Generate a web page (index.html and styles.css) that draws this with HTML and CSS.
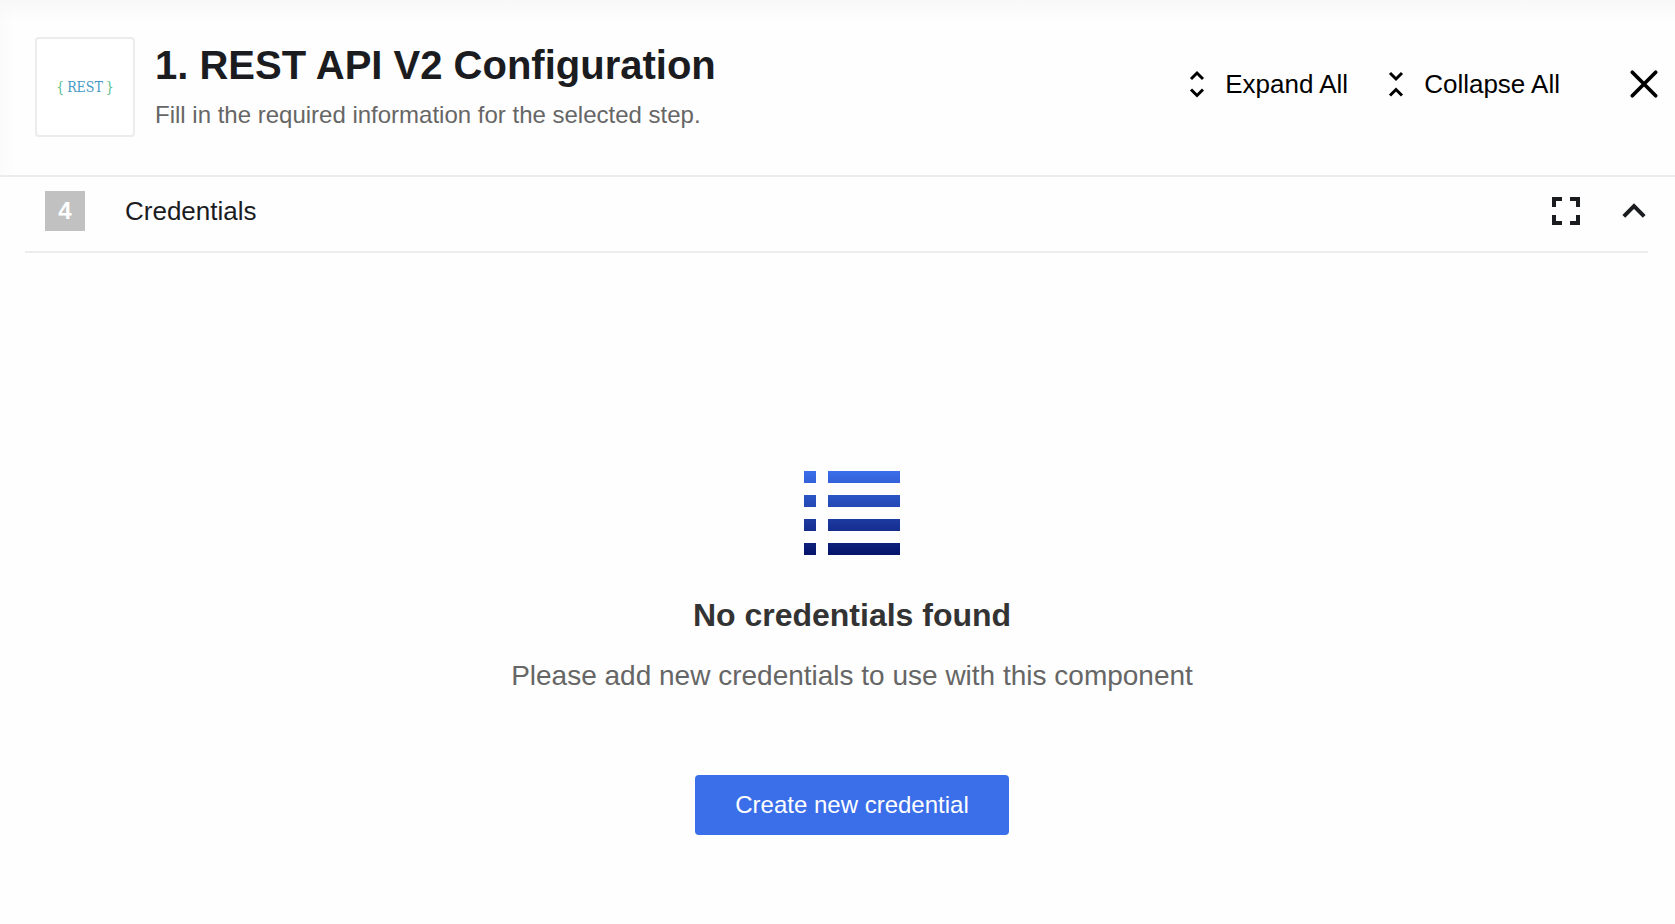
FILE: index.html
```html
<!DOCTYPE html>
<html lang="en">
<head>
<meta charset="utf-8">
<title>REST API V2 Configuration</title>
<link rel="stylesheet" href="styles.css">
</head>
<body>
<header class="header">
  <div class="logo"><span class="logo-brace">{</span><span class="logo-name">REST</span><span class="logo-brace">}</span></div>
  <div class="heading">
    <h1 class="title">1. REST API V2 Configuration</h1>
    <p class="subtitle">Fill in the required information for the selected step.</p>
  </div>
  <div class="actions">
    <button class="action" type="button">
      <svg width="32" height="32" viewBox="0 0 32 32" fill="none" stroke="currentColor" stroke-width="3" aria-hidden="true"><path d="M10 11l6-6 6 6M10 21.500l6 6 6-6"/></svg>
      Expand All
    </button>
    <button class="action" type="button">
      <svg width="32" height="32" viewBox="0 0 32 32" fill="none" stroke="currentColor" stroke-width="3" aria-hidden="true"><path d="M10 5l6 6 6-6M10 27.500l6-6 6 6"/></svg>
      Collapse All
    </button>
    <button class="icon-button close" type="button" aria-label="Close">
      <svg width="40" height="40" viewBox="0 0 40 40" fill="none" stroke="currentColor" stroke-width="3.700" stroke-linecap="round" aria-hidden="true"><path d="M8.300 8.300l23.400 23.400M31.700 8.300L8.300 31.700"/></svg>
    </button>
  </div>
</header>
<main class="section">
  <div class="section-bar">
    <span class="badge">4</span>
    <h2 class="section-title">Credentials</h2>
    <div class="section-tools">
      <button class="icon-button" type="button" aria-label="Full screen">
        <svg width="28" height="28" viewBox="0 0 28 28" fill="none" stroke="currentColor" stroke-width="4" aria-hidden="true"><path d="M2 10V2h8M18 2h8v8M26 18v8h-8M10 26H2v-8"/></svg>
      </button>
      <button class="icon-button" type="button" aria-label="Collapse section" aria-expanded="true">
        <svg width="28" height="28" viewBox="0 0 28 28" fill="none" stroke="currentColor" stroke-width="4" aria-hidden="true"><path d="M3.800 19.300 14 9.100l10.200 10.200"/></svg>
      </button>
    </div>
  </div>
  <div class="empty">
    <svg width="96" height="84" viewBox="0 0 96 84" aria-hidden="true">
      <defs><linearGradient id="list-fill" gradientUnits="userSpaceOnUse" x1="0" y1="0" x2="0" y2="84"><stop offset="0" stop-color="#3b6eea"/><stop offset="1" stop-color="#06146a"/></linearGradient></defs>
      <path fill="url(#list-fill)" d="M0 0h12v12H0zM24 0h72v12H24zM0 24h12v12H0zM24 24h72v12H24zM0 48h12v12H0zM24 48h72v12H24zM0 72h12v12H0zM24 72h72v12H24z"/>
    </svg>
    <h3 class="empty-title">No credentials found</h3>
    <p class="empty-text">Please add new credentials to use with this component</p>
    <button class="primary" type="button">Create new credential</button>
  </div>
</main>
</body>
</html>
```
FILE: styles.css
```css
* {
  box-sizing: border-box;
}

body {
  margin: 0;
  background: #fefefe;
  color: #1b1c1f;
  font-family: "Liberation Sans", Arial, sans-serif;
}

h1, h2, h3, p {
  margin: 0;
}

button {
  padding: 0;
  border: 0;
  background: none;
  color: inherit;
  font-family: inherit;
  cursor: pointer;
}

svg {
  display: block;
  flex: none;
}

.header {
  display: flex;
  align-items: center;
  gap: 20px;
  padding: 37px 11px 38px 35px;
  border-bottom: 2px solid #ececec;
  background:
    linear-gradient(to bottom, #f8f8f8, rgba(254, 254, 254, 0) 22px),
    linear-gradient(to right, #fbfbfb, #fefefe 14px);
}

.logo {
  display: flex;
  flex: none;
  align-items: center;
  justify-content: center;
  gap: 3px;
  width: 100px;
  height: 100px;
  border: 2px solid #ececec;
  border-radius: 4px;
  background: #fff;
  font: 14px/20px "DejaVu Serif Condensed", "DejaVu Serif", serif;
}

.logo-brace {
  color: #55bd8b;
}

.logo-name {
  color: #4798c4;
}

.heading {
  flex: 1;
  padding-bottom: 2px;
}

.title {
  margin-bottom: 10px;
  font-size: 40px;
  line-height: 48px;
}

.subtitle {
  color: #666;
  font-size: 24px;
  line-height: 32px;
}

.actions {
  display: flex;
  align-items: center;
  gap: 32px;
  padding-bottom: 6px;
  color: #000;
}

.action {
  display: flex;
  align-items: center;
  gap: 12px;
  font-size: 26px;
  line-height: 32px;
  white-space: nowrap;
}

.close {
  margin-left: 32px;
}

.section {
  padding: 0 27px 0 25px;
}

.section-bar {
  display: flex;
  align-items: center;
  gap: 40px;
  padding: 14px 0 20px 20px;
  border-bottom: 2px solid #ececec;
}

.badge {
  width: 40px;
  background: #c1c1c1;
  color: #fff;
  font-size: 24px;
  font-weight: bold;
  line-height: 40px;
  text-align: center;
}

.section-title {
  flex: 1;
  font-size: 26px;
  font-weight: normal;
  line-height: 32px;
}

.section-tools {
  display: flex;
  gap: 40px;
}

.empty {
  display: flex;
  flex-direction: column;
  align-items: center;
  padding: 218px 0 80px 31px;
  text-align: center;
}

.empty-title {
  margin-top: 40px;
  color: #333;
  font-size: 32px;
  line-height: 40px;
}

.empty-text {
  margin-top: 25px;
  color: #666;
  font-size: 28px;
  line-height: 32px;
}

.primary {
  margin-top: 83px;
  padding: 14px 40px;
  border-radius: 4px;
  background: #3b6ee9;
  color: #fff;
  font-size: 24px;
  line-height: 32px;
}
```
